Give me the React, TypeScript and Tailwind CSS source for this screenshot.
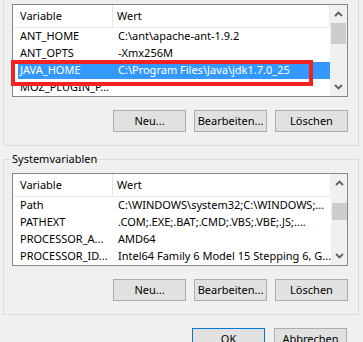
import React from 'react';

type Row = { name: string; value: string };

const userRows: Row[] = [
  { name: 'ANT_HOME', value: 'C:\\ant\\apache-ant-1.9.2' },
  { name: 'ANT_OPTS', value: '-Xmx256M' },
  { name: 'JAVA_HOME', value: 'C:\\Program Files\\Java\\jdk1.7.0_25' },
  { name: 'MOZ_PLUGIN_P...', value: '' },
];

const systemRows: Row[] = [
  { name: 'Path', value: 'C:\\WINDOWS\\system32;C:\\WINDOWS;...' },
  { name: 'PATHEXT', value: '.COM;.EXE;.BAT;.CMD;.VBS;.VBE;.JS;....' },
  { name: 'PROCESSOR_A...', value: 'AMD64' },
  { name: 'PROCESSOR_ID...', value: 'Intel64 Family 6 Model 15 Stepping 6, G...' },
];

const Chevron: React.FC<{ down?: boolean }> = ({ down }) => (
  <svg width="9" height="6" viewBox="0 0 9 6" className="block">
    <polyline
      points={down ? '1,1 4.5,4.5 8,1' : '1,5 4.5,1.5 8,5'}
      fill="none"
      stroke="#606060"
      strokeWidth="1.8"
    />
  </svg>
);

const Button: React.FC<{ label: string; primary?: boolean }> = ({ label, primary }) => (
  <div
    className={`w-[73px] h-[22px] flex items-center justify-center bg-[#e1e1e1] border text-[11px] text-black ${
      primary ? 'border-[#0078d7]' : 'border-[#adadad]'
    }`}
  >
    {label}
  </div>
);

const ButtonRow: React.FC = () => (
  <div className="flex justify-end gap-[8px]">
    <Button label="Neu..." />
    <Button label="Bearbeiten..." />
    <Button label="Löschen" />
  </div>
);

const VarList: React.FC<{
  rows: Row[];
  selected?: number;
  thumbTop: number;
  thumbHeight: number;
}> = ({ rows, selected, thumbTop, thumbHeight }) => (
  <div className="w-[336px] h-[93px] border border-[#828790] bg-white flex overflow-hidden">
    <div className="flex-1 flex flex-col">
      <div className="h-[25px] flex border-b border-[#e5eef8] border-r text-[11px] text-black">
        <div className="w-[100px] pl-[7px] flex items-center border-r border-[#e5e5e5]">Variable</div>
        <div className="flex-1 pl-[4px] flex items-center">Wert</div>
      </div>
      <div className="flex flex-col pl-[5px]">
        {rows.map((r, i) => (
          <div
            key={r.name}
            className={`h-[17px] flex items-center text-[11px] whitespace-nowrap overflow-hidden ${
              i === selected ? 'bg-[#3399ff] text-white' : 'text-black'
            }`}
          >
            <div className="w-[100px] pl-[2px]">{r.name}</div>
            <div className="flex-1">{r.value}</div>
          </div>
        ))}
      </div>
    </div>
    <div className="w-[17px] bg-[#f0f0f0] relative flex flex-col items-center justify-between py-[6px]">
      <Chevron />
      <Chevron down />
      <div
        className="absolute left-[1px] w-[15px] bg-[#cdcdcd]"
        style={{ top: thumbTop, height: thumbHeight }}
      />
    </div>
  </div>
);

export default function App() {
  return (
    <div
      className="w-[363px] h-[342px] bg-[#f0f0f0] overflow-hidden relative"
      style={{ fontFamily: '"Noto Sans", "Open Sans", sans-serif' }}
    >
      <div className="ml-[3px] w-[356px] border-l border-r border-b border-[#dcdcdc] pl-[8px] pr-[10px] pt-[4px] pb-[13px]">
        <VarList rows={userRows} selected={2} thumbTop={18} thumbHeight={21} />
        <div className="mt-[13px]">
          <ButtonRow />
        </div>
      </div>

      <fieldset className="ml-[3px] mt-[5px] w-[356px] border border-[#dcdcdc] pl-[8px] pr-[10px] pb-[13px]">
        <legend className="ml-[-1px] px-[1px] text-[11px] leading-[16px] text-black">Systemvariablen</legend>
        <div className="mt-[6px]">
          <VarList rows={systemRows} thumbTop={29} thumbHeight={17} />
        </div>
        <div className="mt-[13px]">
          <ButtonRow />
        </div>
      </fieldset>

      <div className="mt-[13px] pr-[16px] flex justify-end gap-[9px]">
        <Button label="OK" primary />
        <Button label="Abbrechen" />
      </div>

      <div className="absolute left-[11px] top-[60px] w-[302px] h-[26px] border-[4px] border-[#f52020]" />
    </div>
  );
}
